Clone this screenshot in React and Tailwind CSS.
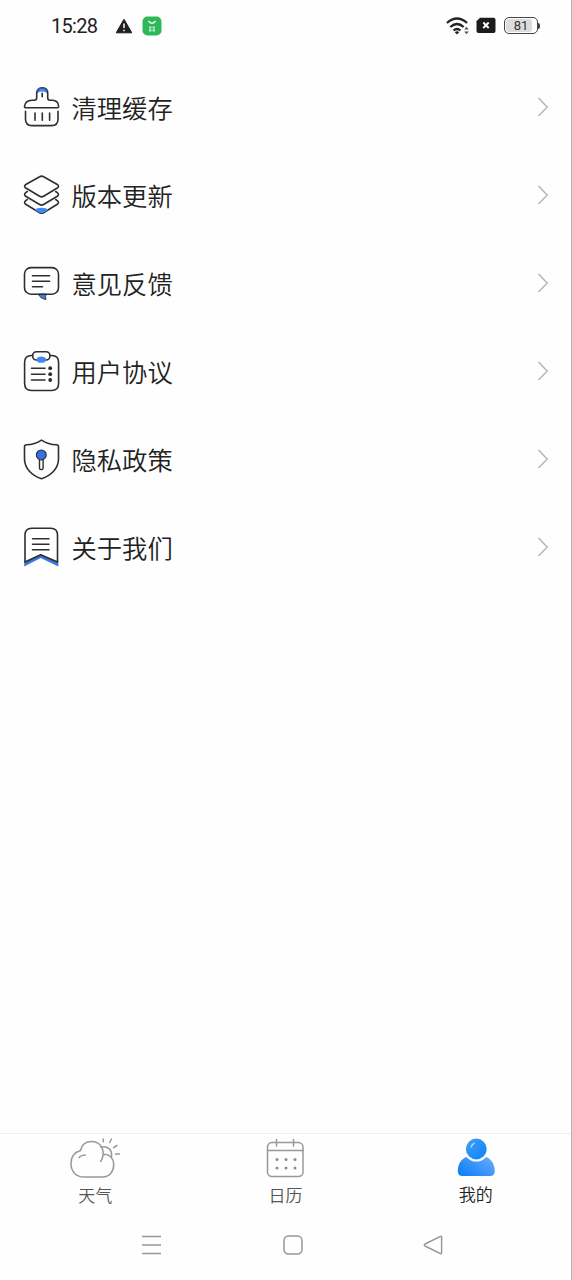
import React from "react";

const iconProps = {
  width: 40,
  height: 44,
  viewBox: "0 0 40 44",
  fill: "none",
  stroke: "#2f2f31",
  strokeWidth: 1.6,
  strokeLinecap: "round",
  strokeLinejoin: "round",
};

const BrushIcon = () => (
  <svg {...iconProps}>
    <path d="M15.700 8.500C15.700 4.800 18 2.600 21.200 2.600S26.700 4.800 26.700 8.500C25 6 17.500 6 15.700 8.500Z" fill="#4a90e8" stroke="none" />
    <path d="M5 22.700H36.500Q37.700 22.700 37.600 21.300C37.400 17 35 15.300 31.500 15.200H29Q26.700 15.200 26.700 12.800V8.500C26.700 5 24.500 2.900 21.200 2.900S15.700 5 15.700 8.500V12.800Q15.700 15.200 13.400 15.200H11C6.500 15.300 4 17.200 3.500 21.300Q3.400 22.700 5 22.700Z" />
    <path d="M16.500 5.800Q18 3 21.200 3T25.900 5.800" stroke="#2f5f9e" strokeWidth="1.500" />
    <path d="M21.200 8.200V11.800M4.500 26.300V34Q4.500 40.600 11 40.600H30.500Q37 40.600 37 34V26.300M14 28V35.300M21.300 28V35.300M28.600 28V35.300" />
  </svg>
);

const LayersIcon = () => (
  <svg {...iconProps}>
    <path d="M18.600 3.700Q20.600 2.500 22.600 3.700L36.300 11.500Q38.800 13.300 36.300 15L22.600 23.300Q20.600 24.500 18.600 23.300L4.800 15Q2.300 13.300 4.800 11.500Z" />
    <path d="M6.300 18.500L4.700 19.600Q2.400 21.500 4.700 23.300L18.600 31.500Q20.600 32.700 22.600 31.500L36.300 23.300Q38.700 21.500 36.300 19.600L34.700 18.500" />
    <path d="M6.300 26.500L4.700 27.600Q2.400 29.500 4.700 31.300L18.600 39.700Q20.600 40.900 22.600 39.700L36.300 31.300Q38.700 29.500 36.300 27.600L34.700 26.500" />
    <path d="M13.800 36.900C16 34 25 34 27.300 36.900L22.600 39.700Q20.600 40.900 18.600 39.700Z" fill="#3f8cf0" stroke="none" />
  </svg>
);

const FeedbackIcon = () => (
  <svg {...iconProps}>
    <path d="M17.500 33.500Q19 37.300 25 38.600Q24 35.700 25 33.500Z" fill="#3b80ee" strokeWidth="0.900" />
    <rect x="3.500" y="6.600" width="34" height="26.600" rx="6.500" />
    <path d="M11.500 14.700H28.600M11.500 20.200H28.600M11.500 25.700H21.500" />
  </svg>
);

const ClipboardIcon = () => (
  <svg {...iconProps}>
    <path d="M11.500 6.500H10.500Q3.600 6.500 3.600 13.500V34.500Q3.600 41.500 10.500 41.500H30.700Q37.600 41.500 37.600 34.500V13.500Q37.600 6.500 30.700 6.500H29" />
    <rect x="11.700" y="2.700" width="17.200" height="8.300" rx="3.800" />
    <ellipse cx="20.300" cy="10.700" rx="5" ry="3.100" fill="#3f8ce8" stroke="none" />
    <path d="M10.500 19.200H24M10.500 25.200H24M10.500 31H24" />
    <g fill="#2b2b2d" stroke="none">
      <circle cx="29.200" cy="19.200" r="1.900" />
      <circle cx="29.200" cy="25.200" r="1.900" />
      <circle cx="29.200" cy="31" r="1.900" />
    </g>
  </svg>
);

const ShieldIcon = () => (
  <svg {...iconProps}>
    <path d="M20.500 3.100C16 6 10.500 7.600 5.500 7.800Q3.500 7.900 3.500 9.800V22C3.500 31.500 11 38.500 20.500 41.700C30 38.500 37.500 31.500 37.500 22V9.800Q37.500 7.900 35.500 7.800C30.500 7.600 25 6 20.500 3.100Z" />
    <rect x="18.500" y="20" width="3.600" height="12.600" rx="1.500" strokeWidth="1.400" />
    <circle cx="20.300" cy="17.900" r="4.900" fill="#3470e8" strokeWidth="1.200" />
  </svg>
);

const BookmarkIcon = () => (
  <svg {...iconProps}>
    <path d="M3.200 36L19.700 30L37.300 36V41.500L19.700 33L3.200 41.500Z" fill="#3977df" stroke="none" />
    <path d="M4 37V10Q4 3.200 10.800 3.200H29.700Q36.500 3.200 36.500 10V37L19.700 29.700L4 37Z" fill="#fff" />
    <path d="M11.500 13.800H28M11.500 19.300H28M11.500 24.800H28" strokeWidth="1.500" />
  </svg>
);

const menuItems = [
  { label: "清理缓存", Icon: BrushIcon },
  { label: "版本更新", Icon: LayersIcon },
  { label: "意见反馈", Icon: FeedbackIcon },
  { label: "用户协议", Icon: ClipboardIcon },
  { label: "隐私政策", Icon: ShieldIcon },
  { label: "关于我们", Icon: BookmarkIcon },
];

const StatusBar = () => (
  <header className="flex h-[51px] items-center pl-[51px] pr-[31px]">
    <span className="w-[64px] font-['Roboto',sans-serif] text-[20px] leading-none tracking-[-0.7px] text-[#222]">15:28</span>
    <svg width="18" height="16" viewBox="0 0 18 16">
      <path d="M9 1.200L16.800 14.800H1.200Z" fill="#202020" stroke="#202020" strokeLinejoin="round" />
      <path d="M9 5.500V10M9 11.700V13.300" stroke="#fff" strokeWidth="1.500" />
    </svg>
    <svg className="ml-[9px]" width="20" height="20" viewBox="0 0 20 20">
      <rect x=".5" y=".5" width="19" height="19" rx="5" fill="#2fb85a" />
      <path d="M6.500 5Q10 9.500 13.500 5" fill="none" stroke="#e2fbe8" strokeWidth="1.300" />
      <path d="M7 10.500H9.500V12.500H7ZM10.500 10.500H13V12.500H10.500ZM7 13.300H9.500V15.500H7ZM10.500 13.300H13V15.500H10.500Z" fill="#b5eac4" />
    </svg>
    <div className="ml-auto flex items-center">
      <svg width="24" height="20" viewBox="0 0 24 20" fill="none" stroke="#222" strokeWidth="2.200">
        <path d="M.9 7Q11 -2 21.100 7M4.300 11Q11 5 17.700 11M7.600 14.500Q11 11.500 14.400 14.500" />
        <path d="M8.800 16.200Q11 14.400 13.200 16.200L11 18.500Z" fill="#222" stroke="none" />
        <path d="M18.200 13.500L20.500 10.800L22.800 13.500ZM18.200 15.500L20.500 18.200L22.800 15.500Z" fill="#555" stroke="none" />
      </svg>
      <svg className="ml-[6px]" width="20" height="17" viewBox="0 0 20 17">
        <path d="M4 .7H17.500Q19.500 .7 19.500 2.700V14Q19.500 16 17.500 16H2.500Q.5 16 .5 14V4.200Z" fill="#1c1c1c" />
        <path d="M7.300 5.500L12.700 11M12.700 5.500L7.300 11" stroke="#fff" strokeWidth="1.900" />
      </svg>
      <div className="ml-[8px] flex h-[17px] w-[34px] rounded-[5px] border-[1.500px] border-[#444] p-px">
        <div className="flex w-[26px] items-center justify-center rounded-[3px] bg-[#dcdcdc] pl-[4px] font-['Roboto',sans-serif] text-[13px] leading-none text-[#333]">
          81
        </div>
      </div>
      <div className="h-[6px] w-[2px] rounded-r bg-[#444]" />
    </div>
  </header>
);

const MenuRow = ({ label, Icon }) => (
  <li className="flex h-[88px] items-center pl-[21px] pr-[22px]">
    <Icon />
    <span className="ml-[10.500px] mt-[1px] text-[25.300px] font-[350] leading-none text-[#222]">{label}</span>
    <svg className="ml-auto" width="12" height="20" viewBox="0 0 12 20" fill="none" stroke="#b9b9b9" strokeWidth="1.600">
      <path d="M1.500 1L10.200 10L1.500 19" />
    </svg>
  </li>
);

const WeatherIcon = () => (
  <svg width="52" height="42" viewBox="0 0 52 42" fill="none" stroke="#999" strokeWidth="1.500" strokeLinecap="round">
    <path d="M11.500 14.500C13 8 17 5.500 22.500 5.500C28.500 5.500 32.500 9 34 14.500Q34.800 20.500 31.700 25.500M11.500 14.500C5 16.500 2 21.500 2 27.500C2 36 7.500 41 15 41H33.500C40.500 41 44.700 35.500 44.700 29C44.700 22.500 41 18.300 34.300 18.300M10 21.500Q12.500 18.800 16.300 19" />
    <path d="M32 11.300C38.500 9.500 44 14 42.300 21.500M34.200 3V5.800M42.500 3L40.700 6.500M48 9.500L44.500 11.700M46.500 18H50.500" />
  </svg>
);

const CalendarIcon = () => (
  <svg width="38" height="40" viewBox="0 0 38 40" fill="none" stroke="#999" strokeWidth="1.500" strokeLinecap="round">
    <rect x="1.500" y="4.500" width="35.500" height="34" rx="4.500" />
    <path d="M1.500 12.500H37M10.500 1.500V8M27.500 1.500V8" />
    <g fill="#8c8c8c" stroke="none">
      <circle cx="11" cy="21.500" r="1.500" />
      <circle cx="20" cy="21.500" r="1.500" />
      <circle cx="29" cy="21.500" r="1.500" />
      <circle cx="11" cy="30" r="1.500" />
      <circle cx="20" cy="30" r="1.500" />
      <circle cx="29" cy="30" r="1.500" />
    </g>
  </svg>
);

const UserIcon = () => (
  <svg width="40" height="40" viewBox="0 0 40 40">
    <defs>
      <linearGradient id="userFill" x1="0" y1="0" x2="1" y2="1">
        <stop offset="0" stopColor="#42a0fa" />
        <stop offset="1" stopColor="#0c82f5" />
      </linearGradient>
      <linearGradient id="bodyFill" x1="0" y1="1" x2="1" y2="0.300">
        <stop offset="0" stopColor="#087cf5" />
        <stop offset="1" stopColor="#5da7fc" />
      </linearGradient>
    </defs>
    <path d="M10 19C4 22 1.800 27.500 1.800 33Q1.800 38 6.500 38H34Q38.800 38 38.800 33C38.800 27.500 36.500 22 30.500 19Q20 25 10 19Z" fill="url(#bodyFill)" />
    <circle cx="20.300" cy="11" r="12.600" fill="#fefefe" />
    <circle cx="20.300" cy="11" r="10.400" fill="url(#userFill)" />
    <path d="M15.200 9Q15.800 6.500 18 5.300" fill="none" stroke="#b9dcff" strokeWidth="1.400" strokeLinecap="round" />
  </svg>
);

const TabBar = () => (
  <nav className="grid h-[86px] grid-cols-3 border-t border-[#eeeeee] text-[17px] font-[350] leading-none text-[#555]">
    <div className="flex flex-col items-center pt-[2px]">
      <WeatherIcon />
      <span className="mt-[8px]">天气</span>
    </div>
    <div className="flex flex-col items-center pt-[4px]">
      <CalendarIcon />
      <span className="mt-[8px]">日历</span>
    </div>
    <div className="flex flex-col items-center pt-[4px] text-[#222]">
      <UserIcon />
      <span className="mt-[7px]">我的</span>
    </div>
  </nav>
);

const SystemNav = () => (
  <div className="flex h-[61px] items-start justify-between pl-[141px] pr-[128px] pt-[15px]">
    <svg width="21" height="22" viewBox="0 0 21 22" stroke="#969696" strokeWidth="1.500">
      <path d="M1 2.500H20M1 11H20M1 19.500H20" />
    </svg>
    <svg width="20" height="22" viewBox="0 0 20 22" fill="none" stroke="#969696" strokeWidth="1.500">
      <rect x="1" y="2" width="18" height="18" rx="4.500" />
    </svg>
    <svg width="20" height="22" viewBox="0 0 20 22" fill="none" stroke="#969696" strokeWidth="1.400" strokeLinejoin="round">
      <path d="M17.500 2.300Q18.600 1.800 18.600 3V19Q18.600 20.200 17.500 19.600L2 12Q.5 11 2 10Z" />
    </svg>
  </div>
);

const App = () => {
  return (
    <div className="flex h-[1280px] w-[572px] flex-col border-r border-[#b5b5b5] bg-[#fefefe] font-['Noto_Sans_CJK_SC',sans-serif]">
      <StatusBar />
      <ul className="mt-[12px] flex-1">
        {menuItems.map((item) => (
          <MenuRow key={item.label} {...item} />
        ))}
      </ul>
      <TabBar />
      <SystemNav />
    </div>
  );
};

export default App;
